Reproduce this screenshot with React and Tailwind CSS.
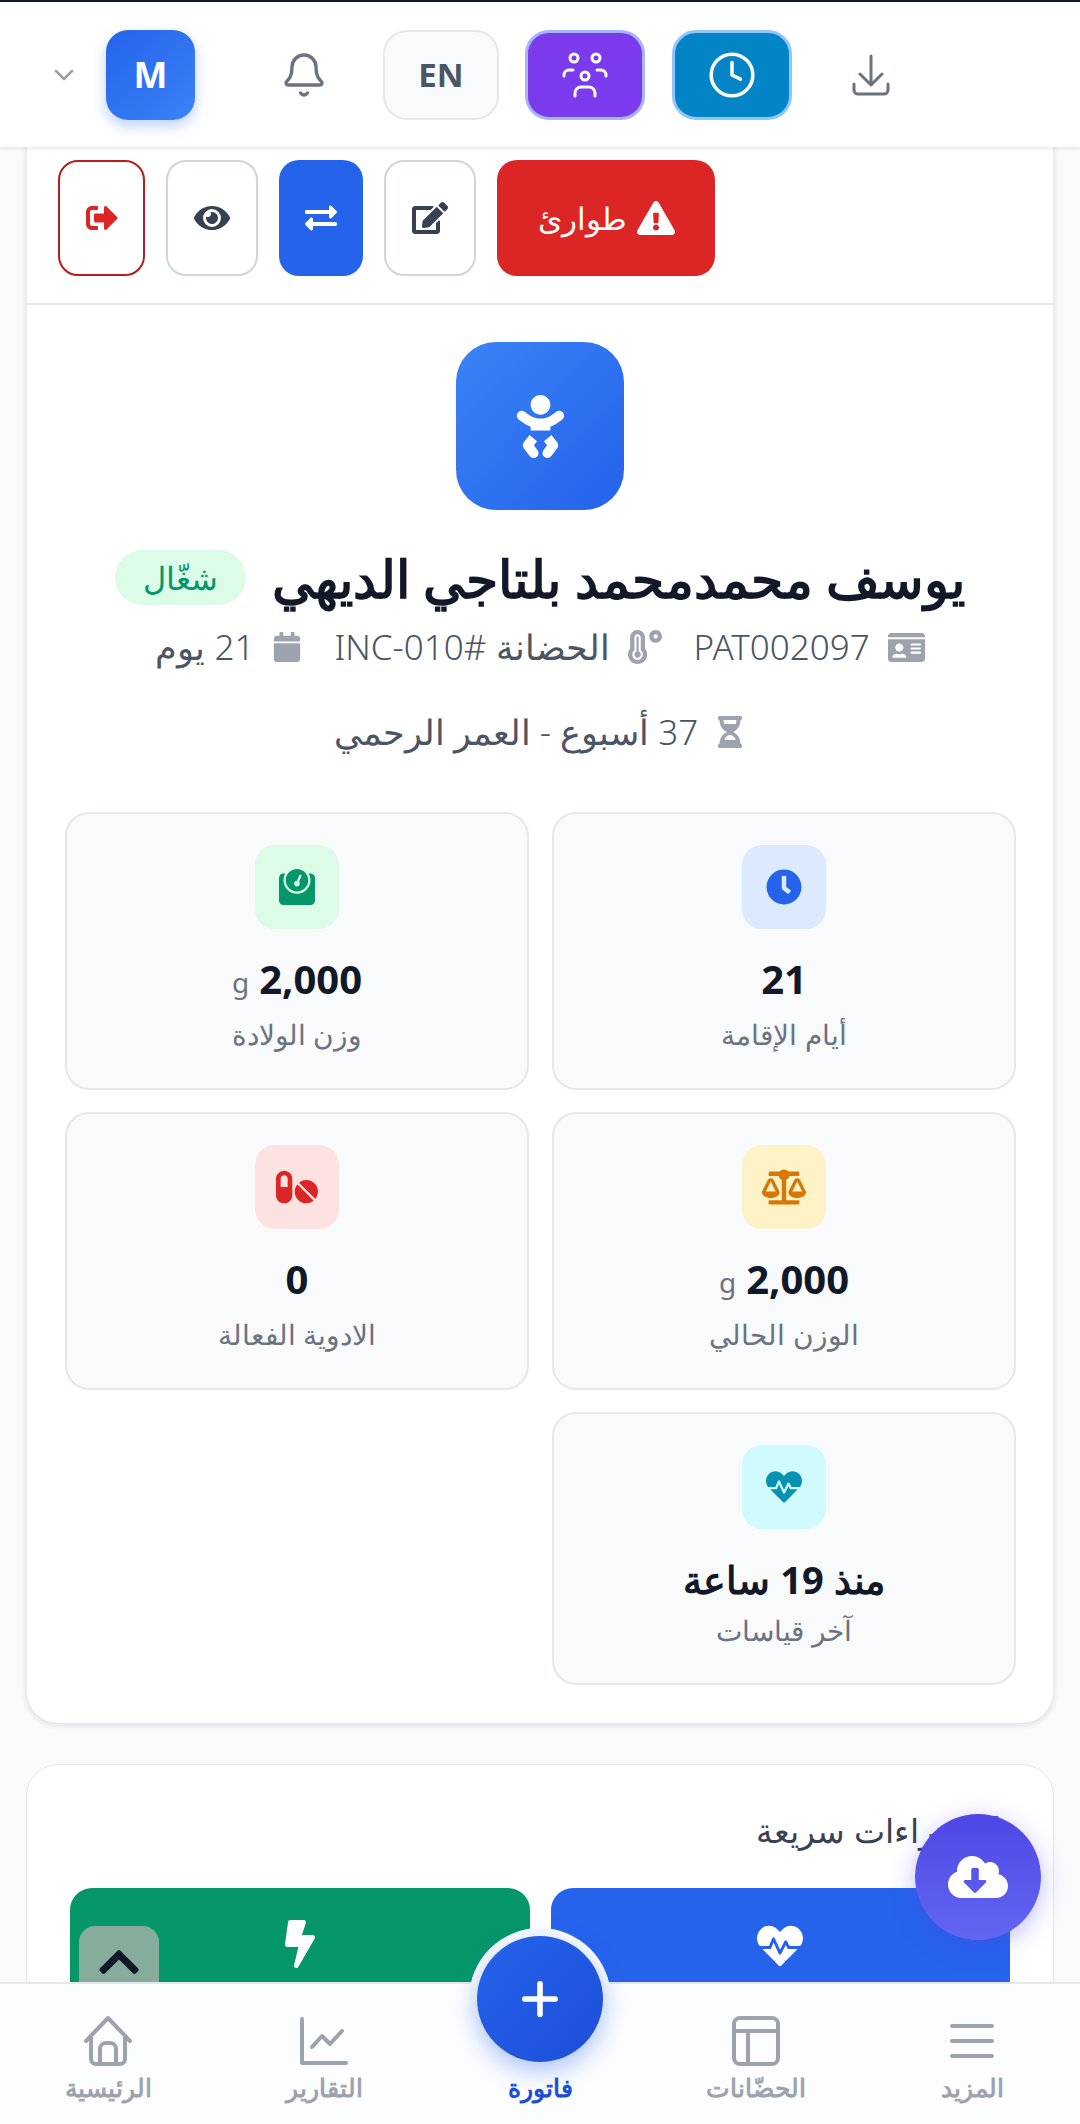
import React from "react";
import {
  FaSignOutAlt, FaEye, FaExchangeAlt, FaEdit, FaExclamationTriangle, FaBaby, FaIdCard,
  FaTemperatureHigh, FaCalendar, FaHourglassHalf, FaClock, FaWeight, FaBalanceScale,
  FaPills, FaHeartbeat, FaCloudDownloadAlt, FaChevronUp, FaBolt,
} from "react-icons/fa";
import { ChevronDown, Bell, Clock, Plus } from "lucide-react";

function Stat({ icon, tint, value, unit, label, short, arabic }) {
  return (
    <div className={`flex flex-col items-center rounded-[24px] border-2 border-[#e5e7eb] bg-[#f9fafb] pt-[31px] ${short ? "h-[273px]" : "h-[278px]"}`}>
      <div className={`flex h-[84px] w-[84px] items-center justify-center rounded-[20px] ${tint}`}>{icon}</div>
      <div className={`mt-[25px] flex h-[50px] items-center gap-[10px] leading-[50px] font-bold text-[#111827] ${arabic ? "text-[38px]" : "text-[40px]"}`}>
        <span>{value}</span>
        {unit && <span className="mt-[6px] text-[28px] font-normal text-[#6b7280]">{unit}</span>}
      </div>
      <div className={`text-[28px] leading-[40px] font-light text-[#6b7280] ${arabic ? "mt-[6px]" : "mt-[10px]"}`}>{label}</div>
    </div>
  );
}

function NavItem({ icon, label }) {
  return (
    <div className="flex w-[216px] flex-col items-center pt-[31px]">
      <div className="flex h-[52px] items-center justify-center text-[#9ca3af]">{icon}</div>
      <div className="mt-[2px] text-[25px] leading-[36px] font-semibold text-[#9ca3af]">{label}</div>
    </div>
  );
}

export default function App() {
  return (
    <div dir="rtl" className="relative flex h-[2124px] w-[1080px] flex-col overflow-hidden bg-[#f9fafb] font-['Noto_Sans',sans-serif]">
      <header className="relative z-20 flex h-[147px] shrink-0 items-center border-t-2 border-[#111827] bg-white pr-[190px] shadow-[0_1px_4px_rgba(0,0,0,0.12)]">
        <svg width="38" height="42" viewBox="0 0 38 42" fill="none" stroke="#6b7280" strokeWidth="3" strokeLinecap="round" strokeLinejoin="round">
          <path d="M19 2v28M8 20l11 11 11-11M2 30v6a4 4 0 0 0 4 4h26a4 4 0 0 0 4-4v-6" />
        </svg>
        <div className="mr-[60px] flex h-[90px] w-[120px] items-center justify-center rounded-[24px] border-[3px] border-[#93c5fd] bg-[#0284c7] text-white">
          <Clock size={50} strokeWidth={1.7} />
        </div>
        <div className="mr-[27px] flex h-[90px] w-[120px] items-center justify-center rounded-[24px] border-[3px] border-[#a5b4fc] bg-[#7c3aed]">
          <svg width="46" height="46" viewBox="0 0 46 46" fill="none" stroke="white" strokeWidth="3" strokeLinecap="round">
            <circle cx="12" cy="6" r="4" />
            <circle cx="34" cy="6" r="4" />
            <circle cx="23" cy="24" r="4" />
            <path d="M2 24v-1a5 5 0 0 1 5-5h4M44 24v-1a5 5 0 0 0-5-5h-4M13 44v-3a6 6 0 0 1 6-6h8a6 6 0 0 1 6 6v3" />
          </svg>
        </div>
        <div className="mr-[26px] flex h-[90px] w-[116px] items-center justify-center rounded-[24px] border-2 border-[#e5e7eb] bg-[#f9fafb] text-[33px] font-bold text-[#4b5563]">EN</div>
        <div className="mr-[55px] text-[#6b7280]"><Bell size={48} strokeWidth={1.7} /></div>
        <div className="mr-[85px] flex h-[90px] w-[89px] items-center justify-center rounded-[22px] bg-linear-to-br from-[#2563eb] to-[#3b82f6] text-[36px] font-bold text-white shadow-[0_6px_14px_rgba(37,99,235,0.3)]">M</div>
        <div className="mr-[26px] text-[#9ca3af]"><ChevronDown size={32} strokeWidth={2} /></div>
      </header>

      <main className="flex flex-col">
        <section className="mx-[26px] rounded-b-[32px] border-x border-[#eceef1] bg-white pb-[38px] shadow-[0_2px_6px_rgba(0,0,0,0.12)]">
          <div className="flex h-[158px] items-start gap-[21px] border-b-2 border-[#e5e7eb] pt-[13px] pr-[338px]">
            <button className="flex h-[116px] w-[218px] items-center justify-center gap-[10px] rounded-[20px] bg-[#dc2626] text-[31px] font-light text-white">
              <FaExclamationTriangle size={38} />
              <span>طوارئ</span>
            </button>
            <button className="flex h-[116px] w-[92px] items-center justify-center rounded-[20px] border-2 border-[#d1d5db] bg-white text-[#374151]"><FaEdit size={36} /></button>
            <button className="flex h-[116px] w-[84px] items-center justify-center rounded-[20px] bg-[#2563eb] text-white"><FaExchangeAlt size={32} /></button>
            <button className="flex h-[116px] w-[92px] items-center justify-center rounded-[20px] border-2 border-[#d1d5db] bg-white text-[#374151]"><FaEye size={36} /></button>
            <button className="flex h-[116px] w-[87px] items-center justify-center rounded-[20px] border-2 border-[#b91c1c] bg-white text-[#dc2626]"><FaSignOutAlt size={32} /></button>
          </div>

          <div className="flex flex-col items-center">
            <div className="mt-[37px] flex h-[168px] w-[168px] items-center justify-center rounded-[40px] bg-linear-to-br from-[#3b82f6] to-[#2563eb] text-white"><FaBaby size={63} /></div>
            <div className="mt-[40px] flex h-[55px] items-center gap-[26px]">
              <h1 className="text-[52px] leading-[55px] font-bold whitespace-nowrap text-[#111827]">يوسف محمدمحمد بلتاجي الديهي</h1>
              <span className="flex h-[55px] w-[131px] items-center justify-center rounded-full bg-[#dcfce7] text-[32px] font-light text-[#059669]">شغّال</span>
            </div>
            <div className="mt-[20px] flex h-[44px] items-center gap-[32px] text-[35px] font-light whitespace-nowrap text-[#4b5563]">
              <span className="flex items-center gap-[18px]"><FaIdCard size={37} className="text-[#9ca3af]" /><span>PAT002097</span></span>
              <span className="flex items-center gap-[18px]"><FaTemperatureHigh size={34} className="text-[#9ca3af]" /><span>الحضانة #INC-010</span></span>
              <span className="flex items-center gap-[18px]"><FaCalendar size={30} className="text-[#9ca3af]" /><span>21 يوم</span></span>
            </div>
            <div className="mt-[41px] flex h-[44px] items-center gap-[16px] text-[35px] font-light whitespace-nowrap text-[#4b5563]">
              <FaHourglassHalf size={32} className="text-[#9ca3af]" />
              <span>37 أسبوع - العمر الرحمي</span>
            </div>
          </div>

          <div className="mt-[58px] grid grid-cols-2 gap-x-[23px] gap-y-[22px] pr-[37px] pl-[38px]">
            <Stat icon={<FaClock size={36} className="text-[#2563eb]" />} tint="bg-[#dbeafe]" value="21" label="أيام الإقامة" />
            <Stat icon={<FaWeight size={36} className="text-[#059669]" />} tint="bg-[#dcfce7]" value="2,000" unit="g" label="وزن الولادة" />
            <Stat icon={<FaBalanceScale size={44} className="text-[#d97706]" />} tint="bg-[#fef3c7]" value="2,000" unit="g" label="الوزن الحالي" />
            <Stat icon={<FaPills size={42} className="text-[#dc2626]" />} tint="bg-[#fee2e2]" value="0" label="الادوية الفعالة" />
            <Stat short arabic icon={<FaHeartbeat size={36} className="text-[#0891b2]" />} tint="bg-[#cffafe]" value="منذ 19 ساعة" label="آخر قياسات" />
          </div>
        </section>

        <section className="mx-[26px] mt-[41px] h-[400px] rounded-[32px] border border-[#e5e7eb] bg-white px-[43px] pt-[44px]">
          <div className="flex h-[44px] items-center gap-[14px] text-[33px] font-light text-[#374151]">
            <FaBolt size={30} className="text-[#2563eb]" />
            <span>إجراءات سريعة</span>
          </div>
          <div className="mt-[35px] grid grid-cols-2 gap-[21px]">
            <div className="flex h-[200px] justify-center rounded-[22px] bg-[#2563eb] pt-[35px] text-white"><FaHeartbeat size={46} /></div>
            <div className="flex h-[200px] justify-center rounded-[22px] bg-[#059669] pt-[32px] text-white"><FaBolt size={48} /></div>
          </div>
        </section>
      </main>

      <button className="absolute top-[1814px] left-[915px] z-30 flex h-[126px] w-[126px] items-center justify-center rounded-full bg-linear-to-b from-[#4f46e5] to-[#6366f1] text-white shadow-[0_6px_24px_rgba(79,70,229,0.35)]">
        <FaCloudDownloadAlt size={60} />
      </button>

      <button className="absolute top-[1926px] left-[79px] z-10 flex h-[80px] w-[80px] items-start justify-center rounded-[16px] bg-[#86ac9b] pt-[13px] text-[#111827]">
        <FaChevronUp size={46} />
      </button>

      <nav className="absolute right-0 bottom-0 left-0 z-20 flex h-[142px] border-t-2 border-[#e5e7eb] bg-[#fcfdfe]">
        <NavItem label="المزيد" icon={
          <svg width="44" height="36" viewBox="0 0 44 36" fill="none" stroke="currentColor" strokeWidth="4" strokeLinecap="round"><path d="M2 3h40M2 18h40M2 33h40" /></svg>
        } />
        <NavItem label="الحضّانات" icon={
          <svg width="48" height="50" viewBox="0 0 48 50" fill="none" stroke="currentColor" strokeWidth="4" strokeLinejoin="round"><rect x="2" y="2" width="44" height="46" rx="6" /><path d="M2 15h44M16 15v33" /></svg>
        } />
        <div className="relative flex w-[216px] flex-col items-center pt-[85px]">
          <div className="absolute -top-[56px] flex h-[142px] w-[142px] items-center justify-center rounded-full bg-[#fcfdfe]">
            <div className="flex h-[126px] w-[126px] items-center justify-center rounded-full bg-linear-to-br from-[#2563eb] to-[#1d4ed8] text-white shadow-[0_8px_26px_rgba(37,99,235,0.4)]">
              <Plus size={52} strokeWidth={2.6} />
            </div>
          </div>
          <div className="relative text-[25px] leading-[36px] font-bold text-[#1d4ed8]">فاتورة</div>
        </div>
        <NavItem label="التقارير" icon={
          <svg width="48" height="48" viewBox="0 0 48 48" fill="none" stroke="currentColor" strokeWidth="4" strokeLinecap="round" strokeLinejoin="round"><path d="M2 2v44h44M12 30l10-11 8 8 12-13" /></svg>
        } />
        <NavItem label="الرئيسية" icon={
          <svg width="48" height="52" viewBox="0 0 48 52" fill="none" stroke="currentColor" strokeWidth="4" strokeLinecap="round" strokeLinejoin="round"><path d="M2 26 24 3l22 23M7 21v23a5 5 0 0 0 5 5h24a5 5 0 0 0 5-5V21M16 49V34a6 6 0 0 1 6-6h4a6 6 0 0 1 6 6v15" /></svg>
        } />
      </nav>
    </div>
  );
}
